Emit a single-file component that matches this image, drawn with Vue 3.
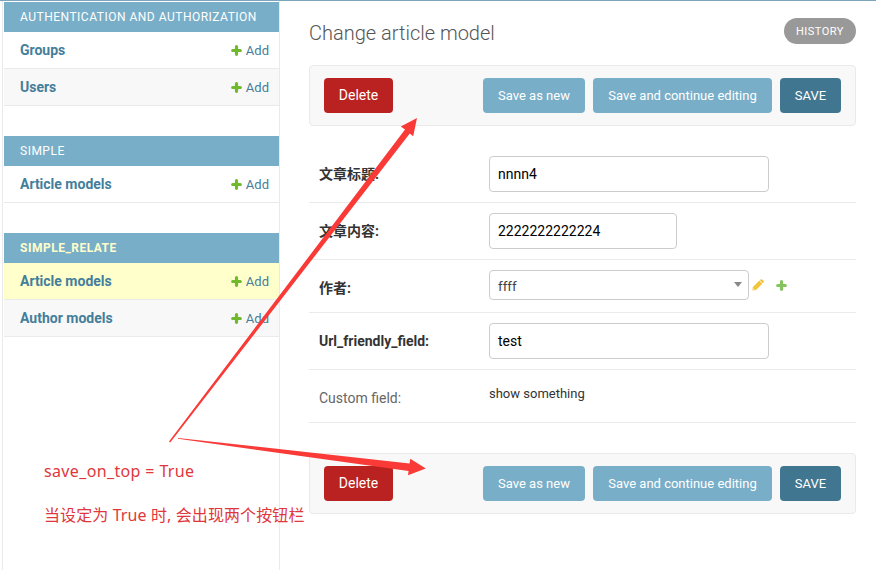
<script setup>
const apps = [
  { name: 'Authentication and Authorization', models: [{ name: 'Groups' }, { name: 'Users' }] },
  { name: 'Simple', models: [{ name: 'Article models' }] },
  { name: 'Simple_Relate', current: true, models: [{ name: 'Article models', current: true }, { name: 'Author models' }] },
]
const fields = [
  { label: '文章标题:', type: 'text', value: 'nnnn4', required: true },
  { label: '文章内容:', type: 'short', value: '2222222222224', required: true },
  { label: '作者:', type: 'select', value: 'ffff', required: true },
  { label: 'Url_friendly_field:', type: 'text', value: 'test', required: true },
  { label: 'Custom field:', type: 'readonly', value: 'show something' },
]
// Each entry places one block of the change form, in order.
const sections = ['submit', 'fields', 'submit']
</script>

<template>
  <div class="page">
    <nav class="sidebar">
      <section v-for="app in apps" :key="app.name" class="module">
        <h2 class="caption" :class="{ current: app.current }">{{ app.name }}</h2>
        <div v-for="m in app.models" :key="m.name" class="model" :class="{ current: m.current }">
          <a class="model-name">{{ m.name }}</a>
          <a class="add">
            <svg class="plus" viewBox="0 0 11 11"><path d="M5.5 1.7V9.3M1.7 5.5H9.3" /></svg>
            <span>Add</span>
          </a>
        </div>
      </section>
    </nav>

    <main class="content">
      <header class="heading">
        <h1>Change article model</h1>
        <a class="history">HISTORY</a>
      </header>

      <template v-for="(section, i) in sections" :key="i">
        <div v-if="section === 'submit'" class="submit-row">
          <a class="btn delete">Delete</a>
          <div class="actions">
            <button class="btn as-new">Save as new</button>
            <button class="btn continue">Save and continue editing</button>
            <button class="btn save">SAVE</button>
          </div>
        </div>
        <div v-else class="fieldset">
          <div v-for="f in fields" :key="f.label" class="form-row" :class="f.type">
            <label :class="{ required: f.required }">{{ f.label }}</label>
            <span v-if="f.type === 'readonly'" class="readonly-value">{{ f.value }}</span>
            <template v-else-if="f.type === 'select'">
              <div class="box select-box">
                <span>{{ f.value }}</span>
                <svg class="caret" viewBox="0 0 8 5"><path d="M0 0H8L4 5Z" /></svg>
              </div>
              <svg class="pencil" viewBox="0 0 12 12">
                <path d="M0.4 11.6L0.9 8L7.3 1.6L10.4 4.7L4 11.1Z" fill="#f2c53d" />
                <path d="M7.8 1.1L8.7 0.4Q9.4 0 10 0.5L11.5 2Q12 2.6 11.6 3.3L10.9 4.2Z" fill="#eebb30" />
                <path d="M1.5 9.2L2.8 10.5L1.3 10.7Z" fill="#fff6d0" />
              </svg>
              <svg class="plus related" viewBox="0 0 11 11"><path d="M5.5 1.7V9.3M1.7 5.5H9.3" /></svg>
            </template>
            <div v-else class="box" :class="f.type + '-box'">{{ f.value }}</div>
          </div>
        </div>
      </template>
    </main>

    <svg class="arrows" viewBox="0 0 876 570">
      <path d="M169 441.5L405 129.4L400.8 126.6L417 118L413.2 136.2L409.8 133.6L170.2 442.5Z" />
      <path d="M178 438L409.5 463.4L410.3 458.8L425.8 468.6L408 475.2L408.6 470.9L178 438.8Z" />
    </svg>
    <div class="note">
      <p class="note-en">save_on_top = True</p>
      <p class="note-zh">当设定为 True 时, 会出现两个按钮栏</p>
    </div>
  </div>
</template>

<style>
body {
  margin: 0;
  background: #fff;
}
</style>

<style scoped>
.page {
  position: relative;
  box-sizing: border-box;
  width: 876px;
  height: 570px;
  overflow: hidden;
  display: flex;
  border-top: 1px solid #7ca5bb;
  font-family: Roboto, "Noto Sans CJK SC", sans-serif;
  font-size: 14px;
  color: #333;
}
.sidebar {
  box-sizing: border-box;
  width: 278px;
  margin-left: 2px;
  padding: 1px 0 0 1px;
  border-left: 1px solid #eaeaea;
  border-right: 1px solid #eaeaea;
  display: flex;
  flex-direction: column;
  gap: 30px;
}
.caption {
  margin: 0;
  height: 30px;
  line-height: 30px;
  padding-left: 16px;
  background: #79aec8;
  color: #fff;
  font-size: 12px;
  font-weight: 400;
  letter-spacing: 0.5px;
  text-transform: uppercase;
}
.caption.current {
  color: #ffffcc;
  font-weight: 700;
}
.model {
  box-sizing: border-box;
  height: 37px;
  padding: 0 10px 0 16px;
  border-bottom: 1px solid #eaeaea;
  display: flex;
  align-items: center;
  justify-content: space-between;
  color: #447e9b;
}
.model:nth-child(odd) {
  background: #f8f8f8;
}
.model.current {
  background: #ffffcc;
}
.model-name {
  font-weight: 700;
}
.add {
  display: flex;
  align-items: center;
  gap: 4px;
  font-size: 13px;
}
.plus {
  width: 11px;
  height: 11px;
  fill: none;
  stroke: #70b82c;
  stroke-width: 3.2;
  stroke-linecap: round;
}
.content {
  width: 547px;
  margin-left: 29px;
}
.heading {
  height: 64px;
  display: flex;
  justify-content: space-between;
}
h1 {
  margin: 20px 0 0;
  font-size: 20px;
  line-height: 24px;
  font-weight: 300;
  color: #555;
}
.history {
  box-sizing: border-box;
  width: 72px;
  height: 26px;
  margin-top: 17px;
  border-radius: 13px;
  background: #999;
  color: #fff;
  font-size: 11px;
  line-height: 27px;
  letter-spacing: 0.5px;
  text-align: center;
}
.submit-row {
  box-sizing: border-box;
  height: 61px;
  padding: 0 14px;
  border: 1px solid #eaeaea;
  border-radius: 4px;
  background: #f8f8f8;
  display: flex;
  align-items: center;
  justify-content: space-between;
}
.actions {
  display: flex;
  gap: 8px;
}
.btn {
  box-sizing: border-box;
  height: 35px;
  padding: 0;
  border: 0;
  border-radius: 4px;
  background: #79aec8;
  color: #fff;
  font-family: inherit;
  font-size: 13px;
  line-height: 35px;
  text-align: center;
}
.delete {
  width: 69px;
  background: #ba2121;
  font-size: 14px;
}
.as-new {
  width: 102px;
}
.continue {
  width: 179px;
}
.save {
  width: 61px;
  background: #417690;
}
.fieldset {
  margin: 20px 0 30px;
}
.form-row {
  box-sizing: border-box;
  height: 57px;
  padding: 10px;
  border-bottom: 1px solid #eaeaea;
  display: flex;
  align-items: flex-start;
}
.form-row.select,
.form-row.readonly {
  height: 53px;
}
label {
  width: 170px;
  line-height: 36px;
  color: #666;
}
label.required {
  color: #333;
  font-weight: 700;
}
.box {
  box-sizing: border-box;
  height: 36px;
  padding: 0 8px;
  border: 1px solid #ccc;
  border-radius: 4px;
  line-height: 34px;
  color: #000;
}
.text-box {
  width: 280px;
}
.short-box {
  width: 188px;
}
.select-box {
  width: 260px;
  height: 30px;
  line-height: 31px;
  padding-right: 6px;
  display: flex;
  justify-content: space-between;
  color: #444;
  font-size: 13.33px;
}
.caret {
  width: 8px;
  height: 5px;
  margin-top: 11px;
  fill: #888;
}
.pencil {
  width: 12px;
  height: 12px;
  margin: 9px 0 0 3px;
}
.plus.related {
  width: 11px;
  height: 11px;
  margin: 10px 0 0 12px;
  stroke: #83c45c;
}
.readonly-value {
  font-size: 13px;
  line-height: 27px;
}
.arrows {
  position: absolute;
  left: 0;
  top: -1px;
  width: 876px;
  height: 570px;
  fill: #f93a37;
}
.note {
  position: absolute;
  left: 44px;
  top: 458px;
  color: #e0373c;
  font-size: 16px;
  white-space: nowrap;
}
.note p {
  margin: 0;
  line-height: 24px;
}
.note-en {
  font-family: "Noto Sans", sans-serif;
  letter-spacing: 0.36px;
}
.note .note-zh {
  margin-top: 20px;
  font-family: "Noto Sans", "Noto Sans CJK SC", sans-serif;
  letter-spacing: 0.1px;
}
</style>
